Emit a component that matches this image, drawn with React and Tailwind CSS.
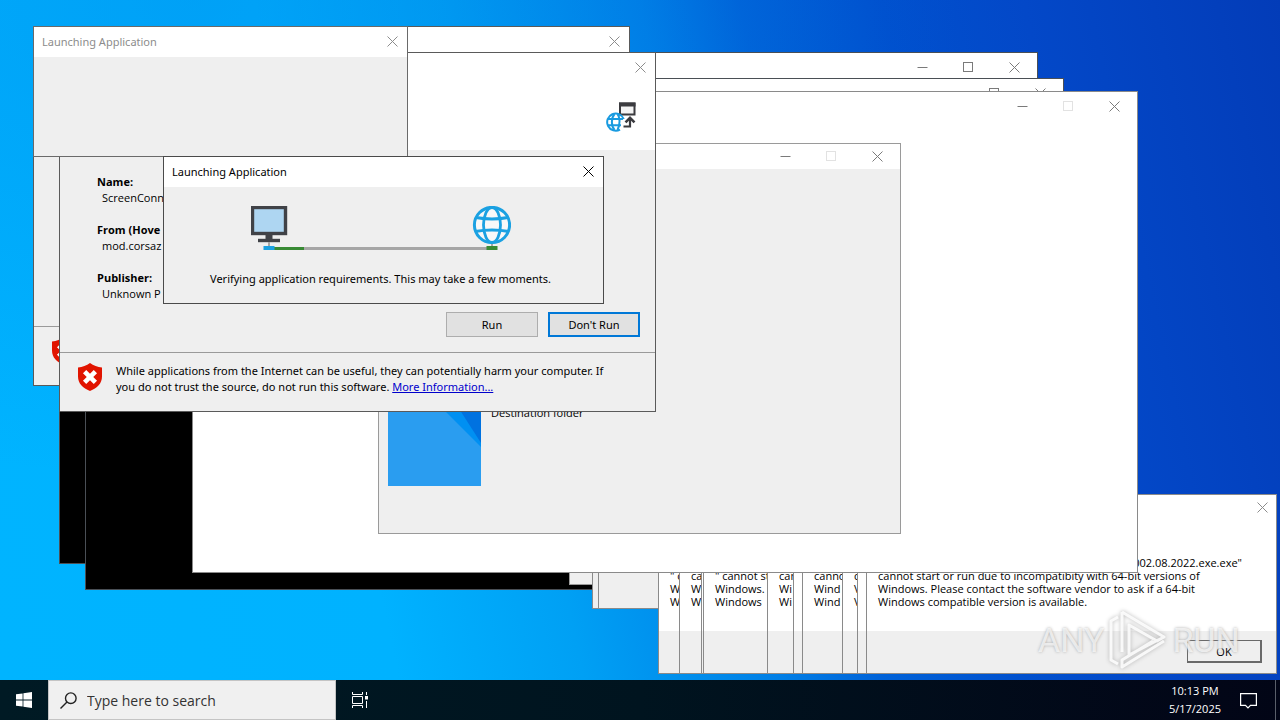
import React from 'react';

function CloseGlyph() {
  return (
    <svg width="11" height="11" viewBox="0 0 11 11" fill="none" stroke="currentColor" aria-hidden="true">
      <path d="M0.5 0.5 L10.5 10.5 M10.5 0.5 L0.5 10.5" />
    </svg>
  );
}

function MinimizeGlyph() {
  return (
    <svg width="11" height="11" viewBox="0 0 11 11" fill="none" stroke="currentColor" aria-hidden="true">
      <path d="M0.5 5.5 H10.5" />
    </svg>
  );
}

function MaximizeGlyph() {
  return (
    <svg width="11" height="11" viewBox="0 0 11 11" fill="none" stroke="currentColor" aria-hidden="true">
      <rect x="0.5" y="0.5" width="9" height="9" />
    </svg>
  );
}

function DialogTitleBar({ title, active }) {
  return (
    <header className="flex h-[30px] shrink-0 items-start justify-between bg-white pl-2">
      <h2 className={active ? 'text-[11px] leading-[30px] text-black' : 'text-[11px] leading-[30px] text-[#8c8c8c]'}>{title}</h2>
      <button type="button" aria-label="Close" className={active ? 'flex h-[29px] w-[29px] items-center justify-center text-black' : 'flex h-[29px] w-[29px] items-center justify-center text-[#8c8c8c]'}>
        <CloseGlyph />
      </button>
    </header>
  );
}

function FrameTitleBar({ compact, canMaximize }) {
  return (
    <header className={compact ? 'flex h-[25px] shrink-0 items-center justify-end bg-white text-[#7a7a7a]' : 'flex h-7 shrink-0 items-center justify-end bg-white text-[#7a7a7a]'}>
      <button type="button" aria-label="Minimize" className="flex h-full w-[45px] items-center justify-center">
        <MinimizeGlyph />
      </button>
      <button type="button" aria-label="Maximize" disabled={!canMaximize} className={canMaximize ? 'flex h-full w-[46px] items-center justify-center' : 'flex h-full w-[46px] items-center justify-center text-[#e2e2e2]'}>
        <MaximizeGlyph />
      </button>
      <button type="button" aria-label="Close" className="flex h-full w-[46px] items-center justify-center">
        <CloseGlyph />
      </button>
    </header>
  );
}

function Console({ place }) {
  return (
    <section className={`absolute flex h-[512px] w-[979px] flex-col border border-[#4a4f55] bg-black ${place}`}>
      <FrameTitleBar canMaximize />
    </section>
  );
}

function ShieldIcon() {
  return (
    <svg width="24" height="28" viewBox="0 0 24 28" aria-hidden="true" className="shrink-0">
      <path d="M12 0 C15.5 2.6 19.5 4 24 4.4 V13.5 C24 20.5 19.2 25.2 12 28 C4.8 25.2 0 20.5 0 13.5 V4.4 C4.500 4 8.500 2.600 12 0 Z" fill="#e11400" />
      <path d="M6.600 8.600 L17.400 19.400 M17.400 8.600 L6.600 19.400" stroke="#fff" strokeWidth="4.600" />
    </svg>
  );
}

function DownloadIcon() {
  return (
    <svg width="30" height="30" viewBox="0 0 30 30" fill="none" aria-hidden="true">
      <rect x="14" y="1.500" width="14.500" height="11" fill="#f4f4f4" stroke="#3b3b3f" strokeWidth="2" />
      <path d="M13 2.500 H29.500" stroke="#3b3b3f" strokeWidth="4" />
      <g stroke="#1a9be0" strokeWidth="2">
        <path d="M17.800 17 A8.600 8.600 0 1 0 14 27.600" />
        <path d="M11.500 12 C14 15 14.500 22 11.500 28 M8.500 12 C5 16 5 24 8.500 28" />
        <path d="M2 17 H17 M2 23.200 H15" />
      </g>
      <path d="M17.500 24.500 H24 V17" stroke="#3b3b3f" strokeWidth="2.200" />
      <path d="M19.500 20.300 L24 15.800 L28.500 20.300" stroke="#3b3b3f" strokeWidth="2.600" />
    </svg>
  );
}

function Detail({ label, value }) {
  return (
    <div>
      <dt className="font-bold">{label}</dt>
      <dd className="pl-[5px]">{value}</dd>
    </div>
  );
}

const details = [
  { label: 'Name:', value: 'ScreenConn' },
  { label: 'From (Hove', value: 'mod.corsaz' },
  { label: 'Publisher:', value: 'Unknown P' },
];

function SecurityWarning() {
  return (
    <section className="absolute top-[52px] left-[59px] flex w-[597px] flex-col overflow-hidden border border-[#5a5a5a] bg-[#efefef] text-[11px] leading-4 text-black">
      <DialogTitleBar />
      <div className="flex h-[67px] justify-end bg-white pt-[19px] pr-[19px]">
        <DownloadIcon />
      </div>
      <dl className="flex flex-col gap-4 pt-6 pl-[37px] font-['Open_Sans',sans-serif] whitespace-nowrap">
        {details.map((detail) => (
          <Detail key={detail.label} {...detail} />
        ))}
      </dl>
      <div className="flex justify-end gap-2.5 pt-[10px] pr-[15px] pb-[15px]">
        <button type="button" className="h-[25px] w-[92px] border border-[#adadad] bg-[#e1e1e1]">Run</button>
        <button type="button" className="h-[25px] w-[92px] border-2 border-[#0078d7] bg-[#e1e1e1]">Don't Run</button>
      </div>
      <footer className="flex items-start gap-[14px] border-t border-[#9a9a9a] pt-[10px] pr-4 pb-4 pl-[18px]">
        <ShieldIcon />
        <p className="w-[520px]">
          While applications from the Internet can be useful, they can potentially harm your computer. If
          <br />
          you do not trust the source, do not run this software.{' '}
          <a href="#more" className="text-[#0000cc] underline">More Information...</a>
        </p>
      </footer>
    </section>
  );
}

function BackgroundWarning() {
  return (
    <section className="absolute top-[26px] left-[33px] flex h-[360px] w-[597px] flex-col justify-between border border-[#5a5a5a] bg-[#efefef]">
      <DialogTitleBar />
      <footer className="h-[59px] border-t border-[#9a9a9a] pt-[10px] pl-[18px]">
        <ShieldIcon />
      </footer>
    </section>
  );
}

function TransferDiagram() {
  return (
    <svg width="260" height="46" viewBox="0 0 260 46" fill="none" aria-hidden="true">
      <rect x="1.500" y="1.500" width="33" height="26" fill="#aed6f2" stroke="#404247" strokeWidth="3.400" />
      <path d="M18 28 V35" stroke="#404247" strokeWidth="7" />
      <path d="M7 34.500 H29" stroke="#404247" strokeWidth="3.400" />
      <path d="M18 36 V41" stroke="#a6a6a6" strokeWidth="2" />
      <rect x="23" y="41" width="214" height="3" fill="#a6a6a6" />
      <rect x="23" y="41" width="30" height="3" fill="#388a34" />
      <rect x="12.500" y="40" width="11" height="4" fill="#1ba1e2" />
      <circle cx="241" cy="19" r="17.600" fill="#f8f8f8" stroke="#1ba1e2" strokeWidth="3" />
      <ellipse cx="241" cy="19" rx="8.500" ry="17.500" stroke="#1ba1e2" strokeWidth="2.800" />
      <path d="M225 11.500 Q241 14.500 257 11.500 M224 25.500 Q241 22.500 258 25.500" stroke="#1ba1e2" strokeWidth="2.800" />
      <path d="M241 38 V41" stroke="#a6a6a6" strokeWidth="2" />
      <rect x="235.500" y="40" width="11" height="4" fill="#388a34" />
    </svg>
  );
}

function LaunchingDialog() {
  return (
    <section className="absolute top-[156px] left-[163px] flex h-[148px] w-[441px] flex-col border border-[#4a4a4a] bg-[#efefef]">
      <DialogTitleBar title="Launching Application" active />
      <div className="flex flex-col pt-[19px]">
        <div className="pl-[87px]">
          <TransferDiagram />
        </div>
        <p className="pt-[19px] pr-1.5 text-center text-[11px] leading-4 text-black">
          Verifying application requirements. This may take a few moments.
        </p>
      </div>
    </section>
  );
}

function SetupWindow() {
  return (
    <section className="absolute top-[143px] left-[378px] flex h-[391px] w-[523px] flex-col border border-[#9a9a9a] bg-[#efefef]">
      <FrameTitleBar compact />
      <div className="flex items-start gap-[10px] pt-[3px] pl-[9px]">
        <svg width="93" height="314" viewBox="0 0 93 314" aria-hidden="true">
          <rect width="93" height="314" fill="#2a9df0" />
          <path d="M0 182 L93 275 V182 Z" fill="#0090f2" />
          <path d="M22 160 L93 271 V160 Z" fill="#0072e0" />
        </svg>
        <p className="pt-[233px] font-['Open_Sans',sans-serif] text-[11px] leading-4 text-black">Destination folder</p>
      </div>
    </section>
  );
}

const messages = [
  { place: 'left-[658px]', lines: ['" c', 'W', 'W'] },
  { place: 'left-[679px]', lines: ['ca', 'W', 'W'] },
  { place: 'left-[701px]', lines: [] },
  { place: 'left-[703px]', lines: ['" cannot st', 'Windows.', 'Windows'] },
  { place: 'left-[767px]', lines: ['can', 'Wi', 'Wi'] },
  { place: 'left-[793px]', lines: [] },
  { place: 'left-[802px]', lines: ['canno', 'Wind', 'Wind'] },
  { place: 'left-[842px]', lines: ['c', 'V', 'V'] },
  { place: 'left-[857px]', lines: [] },
  {
    place: 'left-[866px]',
    file: '002.08.2022.exe.exe"',
    lines: [
      'cannot start or run due to incompatibity with 64-bit versions of',
      'Windows. Please contact the software vendor to ask if a 64-bit',
      'Windows compatible version is available.',
    ],
  },
];

function MessageBox({ place, file, lines }) {
  return (
    <section className={`absolute top-[494px] flex h-[180px] w-[411px] flex-col border border-[#8a8a8a] bg-white font-['Open_Sans',sans-serif] text-[11px] leading-[13px] text-black ${place}`}>
      <header className="flex h-6 justify-end text-[#8c8c8c]">
        <button type="button" aria-label="Close" className="flex w-7 items-center justify-center">
          <CloseGlyph />
        </button>
      </header>
      <div className="flex h-28 flex-col pt-[37px] pl-[11px] whitespace-nowrap">
        <p className="h-[13px] pr-[34px] text-right">{file}</p>
        {lines.map((line, index) => (
          <p key={index}>{line}</p>
        ))}
      </div>
      <footer className="flex flex-1 items-start justify-end bg-[#efefef] pt-[9px] pr-[14px]">
        {file && (
          <button type="button" className="h-[23px] w-[75px] border border-r-2 border-b-2 border-[#696969] bg-[#efefef]">OK</button>
        )}
      </footer>
    </section>
  );
}

function Watermark() {
  return (
    <div aria-hidden="true" className="pointer-events-none absolute top-[608px] left-[1038px] flex h-16 items-center gap-1 font-['Liberation_Sans_Narrow','Roboto',sans-serif] text-[34px] text-white/70 [text-shadow:0_0_3px_#aaa]">
      <span>ANY</span>
      <svg width="60" height="64" viewBox="0 0 60 64" fill="none" className="drop-shadow-[0_0_2px_#aaa]" stroke="#fff" strokeOpacity="0.850" strokeWidth="3" strokeLinejoin="round">
        <path d="M14 4 V44 M14 4 L56 29 L49 33 L21 17 V47 L56 29 M56 33 L14 59 V52 L45 33" />
        <path d="M10 9 L3 13 V52 L10 56" />
      </svg>
      <span>RUN</span>
    </div>
  );
}

function Taskbar() {
  return (
    <nav className="flex h-10 shrink-0 items-center bg-linear-to-r from-[#001a24] via-[#00141f] to-[#020516] font-['Open_Sans',sans-serif] text-white">
      <button type="button" aria-label="Start" className="flex h-full w-12 items-center justify-center">
        <svg width="16" height="16" viewBox="0 0 16 16" fill="currentColor" aria-hidden="true">
          <path d="M0 2.300 L6.600 1.400 V7.600 H0 Z M7.400 1.300 L16 0 V7.600 H7.400 Z M0 8.400 H6.600 V14.600 L0 13.700 Z M7.400 8.400 H16 V16 L7.400 14.700 Z" />
        </svg>
      </button>
      <label className="flex h-full w-72 items-center gap-[10px] border border-[#c4c4c4] bg-[#f0f0f0] pl-[11px] text-[#222]">
        <svg width="17" height="17" viewBox="0 0 17 17" fill="none" stroke="currentColor" strokeWidth="1.400" aria-hidden="true">
          <circle cx="10.800" cy="6.200" r="5.300" />
          <path d="M7 10 L0.500 16.500" />
        </svg>
        <input type="text" aria-label="Search" placeholder="Type here to search" className="min-w-0 flex-1 bg-transparent text-[14px] outline-none placeholder:text-[#333]" />
      </label>
      <button type="button" aria-label="Task View" className="flex h-full w-12 items-center justify-center">
        <svg width="16" height="16" viewBox="0 0 16 16" fill="none" stroke="currentColor" aria-hidden="true">
          <path d="M0.500 0 V2.500 H10.500 V0 M0.500 16 V13.500 H10.500 V16 M0.500 4.500 H10.500 V11.500 H0.500 Z M14.500 0 V3 M14.500 9 V16" />
          <rect x="13" y="4" width="3" height="3.500" fill="currentColor" stroke="none" />
        </svg>
      </button>
      <div className="ml-auto flex h-full items-center">
        <time className="text-center text-[11px] leading-[18px]">
          10:13 PM
          <br />
          5/17/2025
        </time>
        <button type="button" aria-label="Notifications" className="flex h-full w-[54px] items-center justify-center">
          <svg width="17" height="17" viewBox="0 0 17 17" fill="none" stroke="currentColor" strokeWidth="1.200" aria-hidden="true">
            <path d="M0.600 1.600 H16.400 V13.400 H10.500 L8 16 L5.500 13.400 H0.600 Z" />
          </svg>
        </button>
        <button type="button" aria-label="Show desktop" className="h-full w-[5px] border-l border-[#5a5f6a]" />
      </div>
    </nav>
  );
}

export default function App() {
  return (
    <div className="flex h-screen flex-col overflow-hidden font-['Noto_Sans','Open_Sans',sans-serif]">
      <main className="relative flex-1 bg-[radial-gradient(ellipse_at_15%_0%,rgba(0,128,230,0.35),transparent_50%),linear-gradient(78deg,#00b4ff_0%,#00b2ff_28%,#00a0f4_41%,#007ee6_55%,#0062d8_62%,#0050ce_72%,#0348c8_82%,#033cb8_100%)]">
        <BackgroundWarning />
        <Console place="top-[52px] left-[59px]" />
        <Console place="top-[78px] left-[85px]" />
        <section className="absolute top-[400px] left-[569px] h-[185px] w-[60px] border border-[#9a9a9a] bg-[#efefef]" />
        <section className="absolute top-[400px] left-[592px] h-[209px] w-[300px] border border-[#8a8a8a] bg-[#efefef]" />
        <section className="absolute top-[400px] left-[598px] h-[209px] w-[300px] border border-[#8a8a8a] bg-[#efefef]" />
        {messages.map((message) => (
          <MessageBox key={message.place} {...message} />
        ))}
        <section className="absolute top-[91px] left-[192px] flex h-[482px] w-[946px] flex-col border border-[#8a8a8a] bg-white">
          <FrameTitleBar />
        </section>
        <SetupWindow />
        <SecurityWarning />
        <section className="absolute top-[26px] left-[33px] flex h-[131px] w-[375px] flex-col border border-[#6a6a6a] bg-[#efefef]">
          <DialogTitleBar title="Launching Application" />
        </section>
        <LaunchingDialog />
        <Watermark />
      </main>
      <Taskbar />
    </div>
  );
}
